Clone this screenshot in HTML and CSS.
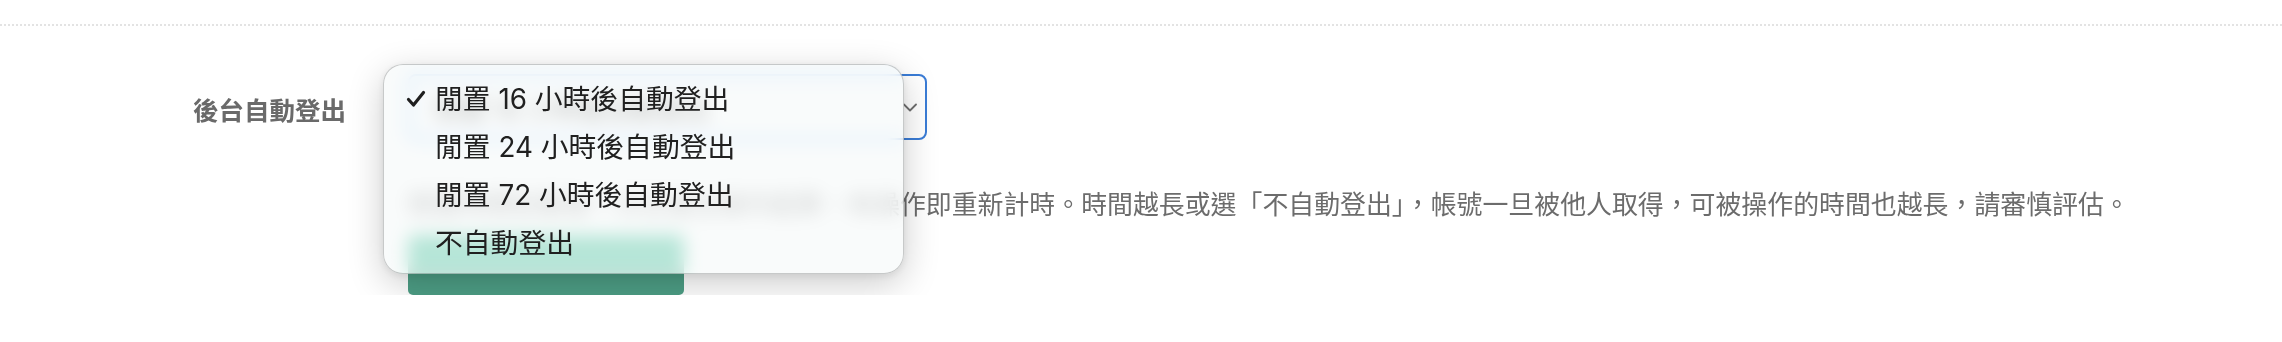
FILE: index.html
```html
<!DOCTYPE html>
<html>
<head>
    <title>後台設定</title>
    <link rel="stylesheet" href="styles.css">
</head>
<body>
    <div class="divider"></div>
    <div class="form-row">
        <label class="form-label" for="auto-logout">後台自動登出</label>
        <div class="form-field">
            <div class="select-wrap">
                <div class="select" id="auto-logout">
                    <span>閒置 16 小時後自動登出</span>
                    <svg class="chevron" width="14" height="9" viewBox="0 0 14 9">
                        <path d="M1 1.5 L7 7.5 L13 1.5" fill="none" stroke="#6f6f6f" stroke-width="1.8" stroke-linecap="round" stroke-linejoin="round"/>
                    </svg>
                </div>
                <div class="dropdown">
                    <div class="option selected">
                        <svg class="check" width="20" height="18" viewBox="0 0 20 18">
                            <path d="M2.5 9.5 L7.5 15 L17.5 2.5" fill="none" stroke="#1f1f1f" stroke-width="3.2" stroke-linecap="round" stroke-linejoin="round"/>
                        </svg>
                        閒置 16 小時後自動登出
                    </div>
                    <div class="option">閒置 24 小時後自動登出</div>
                    <div class="option">閒置 72 小時後自動登出</div>
                    <div class="option">不自動登出</div>
                </div>
            </div>
            <p class="help">閒置時間從最後一次在後台操作起算，有操作即重新計時。時間越長或選「不自動登出」，帳號一旦被他人取得，可被操作的時間也越長，請審慎評估。</p>
            <button class="save" aria-label="儲存"></button>
        </div>
    </div>
</body>
</html>
```

FILE: styles.css
```css
* {
    margin: 0px;
    padding: 0px;
    box-sizing: border-box;
}
body {
    font-family: "Inter", "Noto Sans CJK TC", sans-serif;
    background: #fff;
    color: #333;
}
.divider {
    margin-top: 24px;
    border-top: 2px dotted #e3e3e3;
}
.form-row {
    display: grid;
    grid-template-columns: 346px 519px;
    column-gap: 62px;
    margin-top: 48px;
}
.form-label {
    text-align: right;
    font-family: "Noto Sans CJK TC", sans-serif;
    font-size: 25.5px;
    font-weight: 700;
    line-height: 70px;
    color: #6a6a6a;
}
.form-field {
    display: flex;
    flex-direction: column;
    align-items: flex-start;
}
.select-wrap {
    position: relative;
    width: 519px;
}
.select {
    display: flex;
    align-items: center;
    justify-content: space-between;
    height: 66px;
    padding: 0 8px 0 24px;
    border: 2px solid #3a7cd6;
    border-radius: 8px;
    background: #fff;
    font-size: 26px;
    color: #333;
}
.help {
    margin-top: 45px;
    font-family: "Noto Sans CJK TC", sans-serif;
    font-size: 25.9px;
    line-height: 36px;
    color: #6c6c6c;
    white-space: nowrap;
}
.save {
    margin-top: 14px;
    width: 276px;
    height: 60px;
    border: none;
    border-radius: 5px;
    background: #4d9e85;
}
.dropdown {
    position: absolute;
    left: -25px;
    top: -10px;
    width: 521px;
    height: 210px;
    padding: 10px 0 6px;
    border: 1px solid rgba(0, 0, 0, 0.2);
    border-radius: 20px;
    background: rgba(247, 249, 249, 0.72);
    backdrop-filter: blur(9px) saturate(2);
    box-shadow: 0 10px 36px rgba(0, 0, 0, 0.2), 0 2px 8px rgba(0, 0, 0, 0.08);
}
.dropdown .option {
    position: relative;
    height: 48px;
    line-height: 48px;
    padding-left: 51px;
    font-size: 27.8px;
    color: #202020;
}
.dropdown .option .check {
    position: absolute;
    left: 22px;
    top: 15px;
}
```
